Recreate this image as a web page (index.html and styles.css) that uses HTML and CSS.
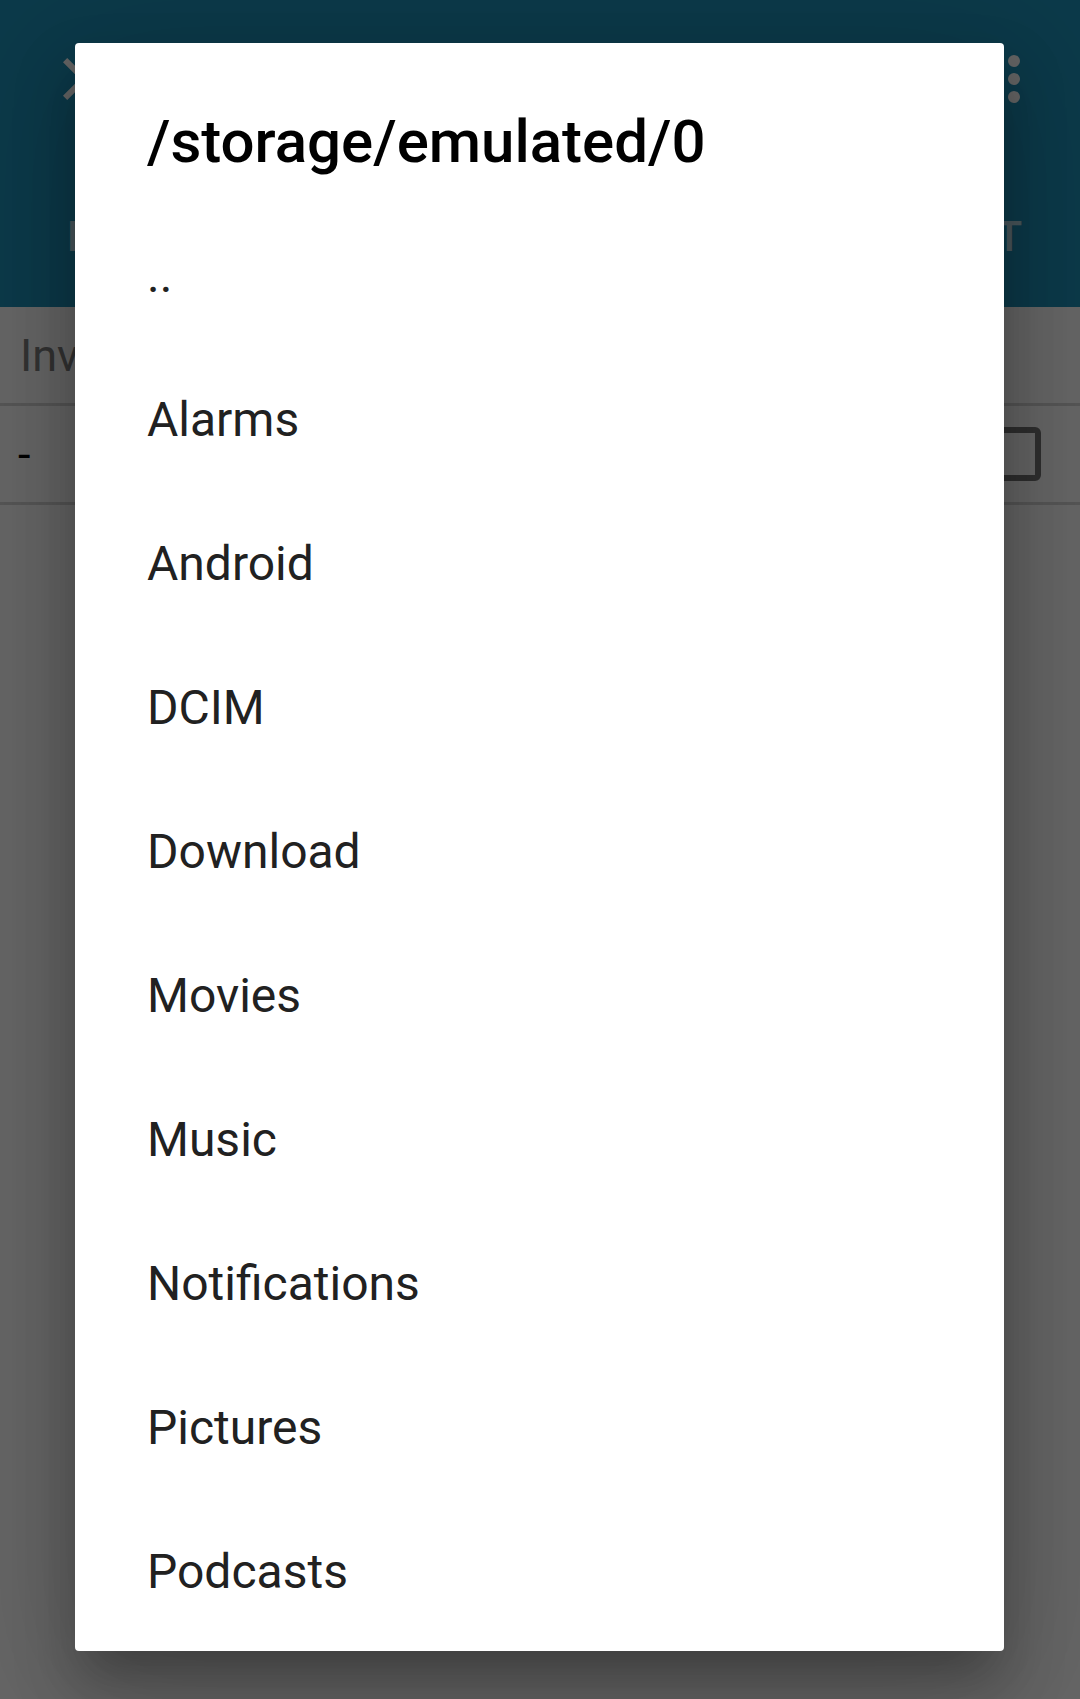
FILE: index.html
```html
<!DOCTYPE html>
<html lang="en">
<head>
<meta charset="utf-8">
<title>Choose folder</title>
<link rel="stylesheet" href="styles.css">
</head>
<body>
<div class="app">
  <header class="appbar">
    <div class="toolbar">
      <span class="icon-btn">
        <svg viewBox="0 0 24 24" width="72" height="72"><path fill="#ffffff" d="M19 6.41L17.59 5 12 10.59 6.41 5 5 6.41 10.59 12 5 17.59 6.41 19 12 13.41 17.59 19 19 17.59 13.41 12z"/></svg>
      </span>
      <span class="spacer"></span>
      <span class="icon-btn">
        <svg viewBox="0 0 24 24" width="72" height="72"><circle cx="12" cy="6" r="2" fill="#ffffff"/><circle cx="12" cy="12" r="2" fill="#ffffff"/><circle cx="12" cy="18" r="2" fill="#ffffff"/></svg>
      </span>
    </div>
    <div class="tabs">
      <span class="tab">LOCAL</span>
      <span class="tab">REPORT</span>
    </div>
  </header>
  <div class="row filter"><span class="hint">Invert selection</span></div>
  <div class="row entry"><span class="dash">-</span><span class="checkbox"></span></div>
</div>
<div class="scrim"></div>
<div class="dialog">
  <h1 class="dialog-title">/storage/emulated/0</h1>
  <ul class="dir-list">
    <li>..</li>
    <li>Alarms</li>
    <li>Android</li>
    <li>DCIM</li>
    <li>Download</li>
    <li>Movies</li>
    <li>Music</li>
    <li>Notifications</li>
    <li>Pictures</li>
    <li>Podcasts</li>
  </ul>
</div>
</body>
</html>
```
FILE: styles.css
```css
html, body {
  margin: 0;
  padding: 0;
}
body {
  width: 1080px;
  height: 1699px;
  overflow: hidden;
  position: relative;
  background: #ffffff;
  font-family: Roboto, "Noto Sans", "Liberation Sans", sans-serif;
}
.app {
  display: flex;
  flex-direction: column;
}
.appbar {
  background: #2091b9;
  height: 307px;
  display: flex;
  flex-direction: column;
}
.toolbar {
  height: 158px;
  display: flex;
  align-items: center;
  padding: 0 30px 0 48px;
}
.icon-btn {
  width: 72px;
  height: 72px;
  display: flex;
}
.spacer { flex: 1; }
.tabs {
  flex: 1;
  display: flex;
  justify-content: space-between;
  align-items: center;
  padding: 8px 57px 0 67px;
}
.tab {
  color: rgba(255, 255, 255, 0.7);
  font-size: 42px;
  font-weight: 500;
  letter-spacing: 1px;
}
.row {
  display: flex;
  align-items: center;
  padding: 0 20px;
}
.filter {
  height: 96px;
  border-bottom: 3px solid #d8d8d8;
}
.hint {
  color: #808080;
  font-size: 45px;
}
.entry {
  height: 96px;
  border-bottom: 3px solid #d8d8d8;
  justify-content: space-between;
  padding: 0 39px 0 18px;
}
.dash {
  color: #000000;
  font-size: 45px;
}
.checkbox {
  width: 42px;
  height: 42px;
  border: 6px solid #757575;
  border-radius: 6px;
}
.scrim {
  position: absolute;
  inset: 0;
  background: rgba(0, 0, 0, 0.6);
}
.dialog {
  position: absolute;
  top: 43px;
  left: 75px;
  width: 929px;
  background: #ffffff;
  border-radius: 4px;
  padding: 64px 0 8px;
  box-sizing: border-box;
  box-shadow: 0 33px 57px 9px rgba(0, 0, 0, 0.16),
              0 27px 138px 24px rgba(0, 0, 0, 0.14),
              0 33px 45px -21px rgba(0, 0, 0, 0.2);
}
.dialog-title {
  margin: 0 72px 26px;
  font-size: 60px;
  line-height: 70px;
  font-weight: 500;
  color: #000000;
}
.dir-list {
  list-style: none;
  margin: 0;
  padding: 0;
}
.dir-list li {
  height: 144px;
  display: flex;
  align-items: center;
  padding: 0 72px;
  font-size: 48px;
  color: #212121;
}
```
